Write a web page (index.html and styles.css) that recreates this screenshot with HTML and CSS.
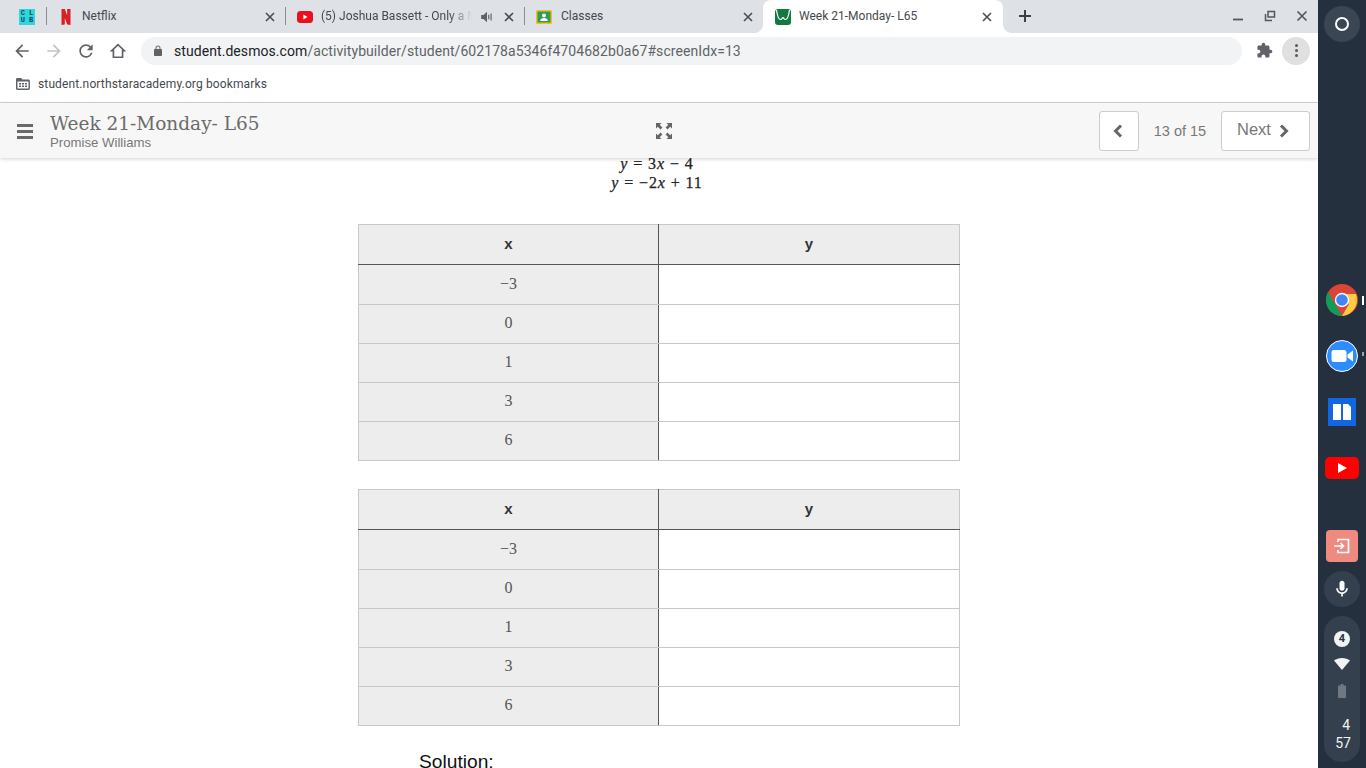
FILE: index.html
```html
<!DOCTYPE html>
<html lang="en">
<head>
<meta charset="utf-8">
<title>Week 21-Monday- L65</title>
<link rel="stylesheet" href="styles.css">
</head>
<body>
<div class="screen">
  <div class="browser">
    <div class="tabstrip">
      <div class="tab pinned">
        <div class="club"><span>C L</span><span>U B</span></div>
      </div>
      <div class="sep"></div>
      <div class="tab">
        <svg class="fav" viewBox="0 0 16 16"><path fill="#d81f26" d="M3.500 0h3.300l2.400 6.500V0h3.300v16l-3.300-.4L6.800 9v6.400L3.500 16z"/></svg>
        <span class="tab-title">Netflix</span>
        <svg class="close" viewBox="0 0 10 10"><path d="M1 1l8 8M9 1l-8 8"/></svg>
      </div>
      <div class="sep"></div>
      <div class="tab tab-yt">
        <svg class="fav" viewBox="0 0 16 16"><rect x="0" y="2" width="16" height="12" rx="3.500" fill="#e8101c"/><path fill="#fff" d="M6.400 5.600v4.800L10.400 8z"/></svg>
        <span class="tab-title fade">(5) Joshua Bassett - Only a M</span>
        <svg class="speaker" viewBox="0 0 12 12"><path fill="#5f6368" d="M1 4.200h2L6 1.500v9L3 7.800H1z"/><path fill="none" stroke="#5f6368" d="M7.500 4v4M9.500 3v6"/></svg>
        <svg class="close" viewBox="0 0 10 10"><path d="M1 1l8 8M9 1l-8 8"/></svg>
      </div>
      <div class="sep"></div>
      <div class="tab tab-classes">
        <svg class="fav" viewBox="0 0 16 16"><rect width="16" height="14" y="1" rx="1" fill="#f4bf26"/><rect x="1.500" y="2.500" width="13" height="11" fill="#2c9a58"/><circle cx="8" cy="6.400" r="2" fill="#fff"/><path fill="#fff" d="M4.200 12c0-2.200 1.800-3 3.800-3s3.800.8 3.800 3z"/></svg>
        <span class="tab-title">Classes</span>
        <svg class="close" viewBox="0 0 10 10"><path d="M1 1l8 8M9 1l-8 8"/></svg>
      </div>
      <div class="tab active">
        <svg class="fav" viewBox="0 0 16 16"><rect width="16" height="16" rx="3" fill="#127a3e"/><path fill="none" stroke="#fff" stroke-width="1.200" d="M1.500 1c.8 6 2.500 9.500 4.200 9.500 1.300 0 1.500-2 2.300-2s1 2 2.300 2c1.700 0 3.400-3.500 4.200-9.500"/></svg>
        <span class="tab-title">Week 21-Monday- L65</span>
        <svg class="close" viewBox="0 0 10 10"><path d="M1 1l8 8M9 1l-8 8"/></svg>
      </div>
      <svg class="newtab" viewBox="0 0 14 14"><path d="M7 1v12M1 7h12"/></svg>
      <div class="winctl">
        <svg class="win" viewBox="0 0 12 12"><path d="M1 9.500h10" stroke-width="1.800"/></svg>
        <svg class="win" viewBox="0 0 12 12"><path d="M4 1.500h6.500V7H4zM1.500 4v6.500H8" stroke-width="1.500"/></svg>
        <svg class="win" viewBox="0 0 12 12"><path d="M1.500 1.500l9 9M10.500 1.500l-9 9" stroke-width="1.700"/></svg>
      </div>
    </div>

    <div class="toolbar">
      <div class="tb-btn"><svg viewBox="0 0 24 24"><path fill="#5f6368" d="M20 11H7.830l5.590-5.590L12 4l-8 8 8 8 1.410-1.410L7.830 13H20v-2z"/></svg></div>
      <div class="tb-btn"><svg viewBox="0 0 24 24"><path fill="#c1c4c8" d="M12 4l-1.410 1.410L16.170 11H4v2h12.170l-5.580 5.590L12 20l8-8z"/></svg></div>
      <div class="tb-btn"><svg viewBox="0 0 24 24"><path fill="#5f6368" d="M17.650 6.350A7.958 7.958 0 0012 4c-4.420 0-7.990 3.580-7.990 8s3.570 8 7.990 8c3.730 0 6.840-2.550 7.730-6h-2.080A5.990 5.990 0 0112 18c-3.310 0-6-2.690-6-6s2.690-6 6-6c1.660 0 3.140.69 4.220 1.780L13 11h7V4l-2.350 2.350z"/></svg></div>
      <div class="tb-btn"><svg viewBox="0 0 24 24"><path fill="none" stroke="#5f6368" stroke-width="2" d="M12 4.300L4.500 11.500H6.500V19.500H17.500V11.500H19.500z"/></svg></div>
      <div class="omnibox">
        <svg class="lock" viewBox="0 0 24 24"><path fill="#5f6368" d="M18 8h-1V6c0-2.760-2.240-5-5-5S7 3.240 7 6v2H6c-1.100 0-2 .9-2 2v10c0 1.100.9 2 2 2h12c1.100 0 2-.9 2-2V10c0-1.100-.9-2-2-2zM9 6c0-1.660 1.340-3 3-3s3 1.340 3 3v2H9V6z"/></svg>
        <span class="url"><span class="host">student.desmos.com</span>/activitybuilder/student/602178a5346f4704682b0a67#screenIdx=13</span>
      </div>
      <div class="tb-btn after"><svg viewBox="0 0 24 24"><path fill="#5f6368" d="M20.500 11H19V7c0-1.100-.9-2-2-2h-4V3.500C13 2.120 11.880 1 10.500 1S8 2.120 8 3.500V5H4c-1.100 0-1.990.9-1.990 2v3.800H3.500c1.490 0 2.700 1.210 2.700 2.700s-1.210 2.700-2.700 2.700H2V20c0 1.100.9 2 2 2h3.800v-1.500c0-1.490 1.210-2.700 2.700-2.700 1.490 0 2.700 1.210 2.700 2.700V22H17c1.100 0 2-.9 2-2v-4h1.500c1.380 0 2.500-1.120 2.500-2.500S21.880 11 20.500 11z"/></svg></div>
      <div class="tb-btn"><div class="menu"><i></i><i></i><i></i></div></div>
    </div>

    <div class="bookmarks">
      <svg class="folder" viewBox="0 0 14 12"><path fill="#5f6368" d="M0 1.500C0 .7.600 0 1.400 0h3.800l1.300 1.500h6c.8 0 1.400.6 1.400 1.400v7.700c0 .8-.6 1.400-1.400 1.400H1.400C.6 12 0 11.400 0 10.600z"/><path fill="#fff" d="M1.500 3.500h11v7h-11z"/><path fill="#5f6368" d="M3 5h2v1.500H3zM6 5h2v1.500H6zM9 5h2v1.500H9zM3 7.500h2V9H3zM6 7.500h2V9H6zM9 7.500h2V9H9z"/></svg>
      <span>student.northstaracademy.org bookmarks</span>
    </div>

    <header class="app-header">
      <div class="head-left">
        <div class="burger"><i></i><i></i><i></i></div>
        <div class="titles">
          <div class="title">Week 21-Monday- L65</div>
          <div class="subtitle">Promise Williams</div>
        </div>
      </div>
      <svg class="expand" viewBox="0 0 16 16"><path fill="#666" d="M0 0h5.500L3.700 1.800 6.400 4.500 4.500 6.400 1.800 3.700 0 5.500zM16 0v5.500l-1.800-1.800-2.700 2.700-1.900-1.900 2.700-2.700L10.500 0zM0 16v-5.500l1.800 1.800 2.700-2.700 1.900 1.900-2.700 2.700L5.500 16zM16 16h-5.500l1.800-1.800-2.700-2.700 1.900-1.900 2.700 2.700 1.800-1.800z"/></svg>
      <div class="pager">
        <div class="btn prev"><svg class="chev" viewBox="0 0 10 14"><path d="M8 1.500L2.500 7 8 12.500"/></svg></div>
        <span class="count">13 of 15</span>
        <div class="btn next"><span>Next</span><svg class="chev" viewBox="0 0 10 14"><path d="M2 1.500L7.500 7 2 12.500"/></svg></div>
      </div>
    </header>

    <main class="content">
      <div class="equations">
        <div><i>y</i> = 3<i>x</i> − 4</div>
        <div><i>y</i> = −2<i>x</i> + 11</div>
      </div>
      <table class="grid">
        <tr class="r40 head"><th>x</th><th>y</th></tr>
        <tr class="r40"><td>−3</td><td></td></tr>
        <tr><td>0</td><td></td></tr>
        <tr><td>1</td><td></td></tr>
        <tr><td>3</td><td></td></tr>
        <tr><td>6</td><td></td></tr>
      </table>
      <table class="grid">
        <tr class="r40 head"><th>x</th><th>y</th></tr>
        <tr class="r40"><td>−3</td><td></td></tr>
        <tr><td>0</td><td></td></tr>
        <tr><td>1</td><td></td></tr>
        <tr><td>3</td><td></td></tr>
        <tr><td>6</td><td></td></tr>
      </table>
      <div class="solution">Solution:</div>
    </main>
  </div>

  <aside class="shelf">
    <div class="launcher"><div class="ring"></div></div>
    <div class="app chrome">
      <svg viewBox="0 0 32 32"><circle cx="16" cy="16" r="16" fill="#db4437"/><path fill="#0f9d58" d="M2.100 8L16 32C7 32 0 25 0 16c0-3 .8-5.600 2.100-8z"/><path fill="#ffcd40" d="M16 10h13.900A16 16 0 0116 32l7-12z"/><circle cx="16" cy="16" r="7.200" fill="#fff"/><circle cx="16" cy="16" r="5.800" fill="#4285f4"/></svg>
      <i class="dot on"></i>
    </div>
    <div class="app zoom">
      <svg viewBox="0 0 32 32"><circle cx="16" cy="16" r="15.500" fill="#2d8cff" stroke="#fff"/><rect x="5.500" y="10" width="15" height="12" rx="2.500" fill="#fff"/><path fill="#fff" d="M21.500 14.500l5.500-4v11l-5.500-4z"/></svg>
      <i class="dot"></i>
    </div>
    <div class="app book">
      <svg viewBox="0 0 28 28"><rect width="28" height="28" fill="#1266e2"/><path fill="#fff" d="M5 6h8v16H5zM15 6h5l3 3v13h-8z"/></svg>
    </div>
    <div class="app yt">
      <svg viewBox="0 0 34 24"><rect y="1" width="34" height="22" rx="5" fill="#f00"/><path fill="#fff" d="M13 7v10l9-5z"/></svg>
    </div>
    <div class="exit">
      <svg viewBox="0 0 18 18"><path fill="none" stroke="#fff" stroke-width="1.700" d="M5 5V2.500h10.500v13H5V13"/><path fill="none" stroke="#fff" stroke-width="1.700" d="M1 9h9M7.500 6l3 3-3 3"/></svg>
    </div>
    <div class="mic">
      <svg viewBox="0 0 24 24"><path fill="#fff" d="M12 14c1.660 0 3-1.340 3-3V5c0-1.660-1.340-3-3-3S9 3.340 9 5v6c0 1.660 1.340 3 3 3z"/><path fill="#fff" d="M17 11c0 2.760-2.240 5-5 5s-5-2.240-5-5H5c0 3.530 2.610 6.430 6 6.920V21h2v-3.080c3.390-.49 6-3.390 6-6.920h-2z"/></svg>
    </div>
    <div class="status">
      <div class="badge">4</div>
      <svg class="wifi" viewBox="0 0 16 12"><path fill="#f1f3f4" d="M0 2.500C2 .9 5 0 8 0s6 .9 8 2.500L8 12z"/></svg>
      <svg class="battery" viewBox="0 0 8 14"><path fill="#6f7780" d="M2.500 0h3v1.500H7.500a.5.5 0 01.5.5v11.500a.5.5 0 01-.5.5H.5a.5.5 0 01-.5-.5V2a.5.5 0 01.5-.5h2z"/></svg>
      <div class="clock"><div class="hh">4</div><div>57</div></div>
    </div>
  </aside>
</div>
</body>
</html>
```
FILE: styles.css
```css
* { box-sizing: border-box; }
html, body { margin: 0; height: 100%; overflow: hidden; }
body { font-family: Roboto, "Liberation Sans", sans-serif; background: #fff; }
i { font-style: normal; }
.screen { display: flex; width: 1366px; height: 768px; overflow: hidden; }
.browser { width: 1318px; height: 768px; display: flex; flex-direction: column; overflow: hidden; }

/* tab strip */
.tabstrip { height: 33px; flex: none; background: #dee1e6; display: flex; align-items: stretch; padding-left: 8px; }
.tab { position: relative; width: 238px; display: flex; align-items: center; padding-left: 11px; font-size: 12px; color: #45494e; }
.tab.pinned { width: 38px; padding-left: 11px; }
.sep { width: 1px; height: 18px; margin-top: 7px; background: #8a8d91; flex: none; }
.fav { width: 16px; height: 16px; flex: none; }
.tab-title { margin-left: 8px; padding-bottom: 2px; flex: 1; min-width: 0; white-space: nowrap; overflow: hidden; }
.fade { -webkit-mask-image: linear-gradient(to right, #000 85%, transparent 100%); mask-image: linear-gradient(to right, #000 85%, transparent 100%); }
.tab-classes .tab-title { margin-left: 9px; }
.close { width: 10px; height: 10px; flex: none; margin: 0 10px 0 6px; fill: none; stroke: #494c50; stroke-width: 1.600; }
.speaker { width: 14px; height: 14px; flex: none; margin-left: 8px; margin-right: 5px; }
.tab-yt .close { margin-left: 5px; }
.tab.active { width: 240px; padding-left: 12px; background: #fff; border-radius: 8px 8px 0 0; }
.tab.active .close { margin-right: 11px; }
.tab.active::before, .tab.active::after { content: ""; position: absolute; bottom: 0; width: 8px; height: 8px; background: radial-gradient(circle at 0 0, transparent 7.500px, #fff 8px); }
.tab.active::before { left: -8px; }
.tab.active::after { right: -8px; background: radial-gradient(circle at 100% 0, transparent 7.500px, #fff 8px); }
.club { width: 16px; height: 16px; background: #2fd6dc; color: #0c4a62; font: 700 7px/7px "Liberation Mono", monospace; display: flex; flex-direction: column; align-items: center; justify-content: center; }
.club span { height: 7px; line-height: 7px; white-space: pre; }
.newtab { width: 14px; height: 14px; margin: 9px 0 0 15px; fill: none; stroke: #3c4043; stroke-width: 2; flex: none; }
.winctl { margin-left: auto; display: flex; gap: 20px; padding: 10px 10px 0 0; }
.win { width: 12px; height: 12px; fill: none; stroke: #54585d; }

/* toolbar */
.toolbar { height: 35px; flex: none; background: #fff; display: flex; align-items: center; padding: 0 6px; }
.tb-btn { width: 32px; height: 28px; flex: none; display: flex; align-items: center; justify-content: center; }
.tb-btn svg { width: 20px; height: 20px; }
.tb-btn.after { margin-left: 6px; }
.tb-btn.after svg { width: 17px; height: 17px; }
.omnibox { flex: 1; height: 28px; margin-left: 7px; border-radius: 14px; background: #f1f3f4; display: flex; align-items: center; padding-left: 11px; font-size: 14px; color: #5f6368; }
.lock { width: 12px; height: 12px; flex: none; }
.url { margin-left: 10px; white-space: nowrap; letter-spacing: .07px; }
.host { color: #202124; }
.menu { width: 28px; height: 28px; border-radius: 50%; background: #e0e0e0; display: flex; flex-direction: column; align-items: center; justify-content: center; gap: 2px; }
.menu i { width: 3px; height: 3px; border-radius: 50%; background: #54585d; }

/* bookmarks */
.bookmarks { height: 35px; flex: none; border-bottom: 1px solid #d5d5d5; background: #fff; display: flex; align-items: center; padding: 0 0 2px 16px; font-size: 12px; color: #45494e; letter-spacing: .13px; }
.folder { width: 14px; height: 12px; margin-right: 8px; flex: none; }

/* app header */
.app-header { position: relative; z-index: 2; height: 55px; flex: none; background: #f7f7f7; box-shadow: 0 1px 4px rgba(0,0,0,.18); display: grid; grid-template-columns: 1fr auto 1fr; align-items: center; padding: 0 8px 0 17px; }
.head-left { display: flex; align-items: center; }
.burger { width: 16px; display: flex; flex-direction: column; gap: 3px; margin-right: 17px; margin-top: 2px; }
.burger i { height: 3px; background: #6a6a6a; }
.titles { padding-top: 2px; }
.title { font: 18.500px/22px "DejaVu Serif", serif; color: #6b6b6b; white-space: nowrap; }
.subtitle { font: 13.200px/15px "Liberation Sans", sans-serif; color: #777; }
.expand { width: 16px; height: 16px; }
.pager { display: flex; align-items: center; justify-content: flex-end; font-family: "Liberation Sans", sans-serif; color: #777; }
.btn { height: 40px; border: 1px solid #ccc; border-radius: 3px; background: #fff; display: flex; align-items: center; justify-content: center; }
.prev { width: 40px; padding-right: 2px; }
.next { width: 89px; gap: 8px; font-size: 16.500px; padding-right: 5px; }
.next span { margin-top: -2px; }
.count { font-size: 14.500px; width: 82px; text-align: center; }
.chev { width: 10px; height: 14px; fill: none; stroke: #666; stroke-width: 3; }

/* content */
.content { flex: 1; min-height: 0; margin-top: -4px; overflow: hidden; background: #fff; display: flex; flex-direction: column; align-items: center; font-family: "Liberation Serif", serif; }
.equations { flex: none; height: 70px; padding-right: 4px; text-align: center; font-size: 16px; line-height: 19px; color: #222; letter-spacing: .9px; -webkit-text-stroke: .25px #222; }
.equations i { font-style: italic; }
.grid { width: 602px; height: 237px; flex: none; table-layout: fixed; border-collapse: collapse; margin: 0 0 28px; font-size: 16px; color: #555; }
.grid tr { height: 39px; }
.grid tr.r40 { height: 40px; }
.grid th, .grid td { border: 1px solid #c8c8c8; padding: 0 0 2px; text-align: center; }
.grid th:first-child, .grid td:first-child { width: 300px; background: #ededed; border-right: 1px solid #555; }
.grid th { background: #ededed; border-bottom: 1px solid #555; font: 700 15px "Liberation Sans", sans-serif; color: #333; }
.solution { flex: none; width: 602px; margin-top: -4px; padding-left: 61px; font: 19.200px/24px "Liberation Sans", sans-serif; color: #111; }

/* shelf */
.shelf { width: 48px; flex: none; background: #25303f; display: flex; flex-direction: column; align-items: center; padding-top: 6px; }
.launcher { width: 36px; height: 36px; border-radius: 50%; background: #3a4654; display: flex; align-items: center; justify-content: center; }
.ring { width: 14px; height: 14px; border: 2px solid #fff; border-radius: 50%; }
.app { position: relative; display: flex; align-items: center; justify-content: center; flex: none; }
.chrome { width: 32px; height: 32px; margin-top: 242px; }
.zoom { width: 32px; height: 32px; margin-top: 24px; }
.book { width: 28px; height: 28px; margin-top: 26px; }
.yt { width: 34px; height: 24px; margin-top: 30px; }
.app svg { width: 100%; height: 100%; display: block; }
.dot { position: absolute; left: 36px; top: 12px; width: 2px; height: 4px; background: #9aa0a6; }
.dot.on { height: 9px; top: 12px; background: #fff; }
.exit { width: 32px; height: 32px; margin-top: 50px; border-radius: 4px; background: #ef8a80; display: flex; align-items: center; justify-content: center; flex: none; }
.exit svg { width: 18px; height: 18px; }
.mic { width: 36px; height: 36px; margin-top: 9px; border-radius: 50%; background: #34404e; display: flex; align-items: center; justify-content: center; flex: none; }
.mic svg { width: 20px; height: 20px; }
.status { width: 36px; height: 146px; margin-top: 9px; border-radius: 18px; background: #34404e; display: flex; flex-direction: column; align-items: center; padding-top: 15px; flex: none; color: #f1f3f4; }
.badge { width: 16px; height: 16px; border-radius: 50%; background: #f1f3f4; color: #263445; font: 700 11px/16px Roboto, sans-serif; text-align: center; }
.wifi { width: 16px; height: 12px; margin-top: 11px; }
.battery { width: 8px; height: 14px; margin-top: 14px; }
.clock { font: 14px/18px Roboto, sans-serif; margin-top: 18px; margin-left: 2px; text-align: right; width: 16px; }
.hh { padding-right: 1px; }
```
